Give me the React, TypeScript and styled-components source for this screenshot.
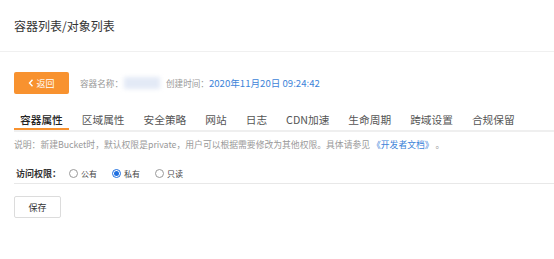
import React from "react";
import styled, { createGlobalStyle } from "styled-components";

const GlobalStyle = createGlobalStyle`
  body {
    margin: 0;
    background: #fff;
    font-family: "Noto Sans CJK SC", "Noto Sans", sans-serif;
    color: #333;
  }
`;

const Header = styled.header`
  height: 51px;
  display: flex;
  align-items: center;
  padding-left: 14px;
  border-bottom: 1px solid #f0f0f0;
  font-size: 12px;
  color: #333;
`;

const Main = styled.main`
  padding: 20px 0 0 14px;
`;

const InfoRow = styled.div`
  display: flex;
  align-items: center;
  height: 22px;
`;

const BackButton = styled.button`
  width: 55px;
  height: 22px;
  border: none;
  border-radius: 2px;
  background: #f8922f;
  color: #fff;
  font-family: inherit;
  font-size: 9px;
  display: flex;
  align-items: center;
  justify-content: center;
  gap: 2px;
  padding: 0;
  margin-right: 11px;
`;

const InfoLabel = styled.span`
  font-size: 8.6px;
  color: #999;
`;

const Blurred = styled.span`
  display: inline-block;
  width: 36px;
  height: 12px;
  margin: 0 6px 0 1px;
  background: #e3eaf6;
  filter: blur(2px);
`;

const DateText = styled.span`
  font-size: 9.6px;
  color: #3d84d9;
`;

const TabBar = styled.nav`
  display: flex;
  gap: 7px;
  margin-top: 13px;
  border-bottom: 2px solid #efefef;
`;

const Tab = styled.div<{ $active?: boolean }>`
  padding: 6px 6px 1px;
  line-height: 14px;
  font-size: 10.7px;
  color: ${(p) => (p.$active ? "#222" : "#555")};
  font-weight: ${(p) => (p.$active ? 500 : 400)};
  border-bottom: 2px solid ${(p) => (p.$active ? "#f8922f" : "transparent")};
`;

const Note = styled.p`
  margin: 7px 0 0;
  line-height: 12px;
  font-size: 8.8px;
  color: #999;
  white-space: nowrap;
`;

const DocLink = styled.a`
  color: #3d84d9;
  text-decoration: none;
`;

const AccessRow = styled.div`
  display: flex;
  align-items: center;
  height: 14px;
  margin-top: 15px;
  padding: 0 0 3px 2px;
  border-bottom: 1px solid #e8e8e8;
`;

const AccessLabel = styled.span`
  font-size: 9px;
  font-weight: 700;
  color: #333;
  margin-right: 8px;
`;

const Option = styled.label`
  display: flex;
  align-items: center;
  gap: 3px;
  font-size: 8px;
  color: #444;
  margin-right: 15px;
`;

const RadioDot = styled.span<{ $checked?: boolean }>`
  width: 9px;
  height: 9px;
  box-sizing: border-box;
  border-radius: 50%;
  border: 1px solid ${(p) => (p.$checked ? "#1e6fe0" : "#999")};
  display: flex;
  align-items: center;
  justify-content: center;
  &::after {
    content: "";
    width: 5px;
    height: 5px;
    border-radius: 50%;
    background: ${(p) => (p.$checked ? "#1e6fe0" : "transparent")};
  }
`;

const SaveButton = styled.button`
  margin-top: 12px;
  width: 47px;
  height: 22px;
  background: #fff;
  border: 1px solid #dcdcdc;
  border-radius: 2px;
  font-family: inherit;
  font-size: 9px;
  color: #333;
  padding: 0;
`;

const tabs = ["容器属性", "区域属性", "安全策略", "网站", "日志", "CDN加速", "生命周期", "跨域设置", "合规保留"];
const options = [
  { label: "公有", checked: false },
  { label: "私有", checked: true },
  { label: "只读", checked: false },
];

export default function App() {
  return (
    <>
      <GlobalStyle />
      <Header>容器列表/对象列表</Header>
      <Main>
        <InfoRow>
          <BackButton>
            <svg width="6" height="8" viewBox="0 0 6 8">
              <path d="M4.5 0.8 L1.5 4 L4.5 7.2" stroke="#fff" strokeWidth="1.4" fill="none" />
            </svg>
            返回
          </BackButton>
          <InfoLabel>容器名称：</InfoLabel>
          <Blurred />
          <InfoLabel>创建时间：</InfoLabel>
          <DateText>2020年11月20日 09:24:42</DateText>
        </InfoRow>
        <TabBar>
          {tabs.map((t, i) => (
            <Tab key={t} $active={i === 0}>
              {t}
            </Tab>
          ))}
        </TabBar>
        <Note>
          说明：新建Bucket时，默认权限是private，用户可以根据需要修改为其他权限。具体请参见 <DocLink>《开发者文档》</DocLink> 。
        </Note>
        <AccessRow>
          <AccessLabel>访问权限：</AccessLabel>
          {options.map((o) => (
            <Option key={o.label}>
              <RadioDot $checked={o.checked} />
              {o.label}
            </Option>
          ))}
        </AccessRow>
        <SaveButton>保存</SaveButton>
      </Main>
    </>
  );
}
